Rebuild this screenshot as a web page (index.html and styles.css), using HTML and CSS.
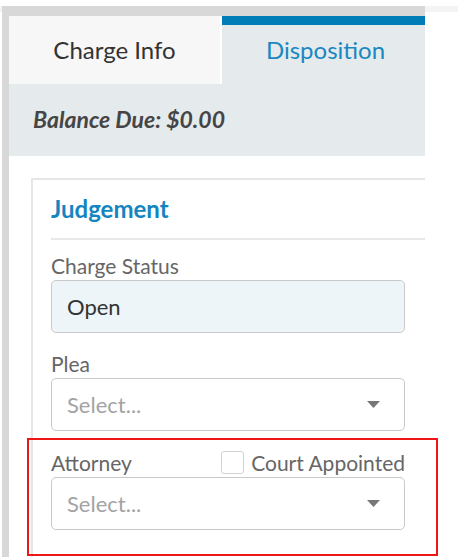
FILE: index.html
```html
<!DOCTYPE html>
<html>
<head>
<meta charset="utf-8">
<link rel="stylesheet" href="styles.css">
</head>
<body>
<div class="page">
  <div class="panel">
    <div class="tabs">
      <div class="tab tab-inactive">Charge Info</div>
      <div class="tab tab-active">Disposition</div>
    </div>
    <div class="balance">Balance Due: $0.00</div>
    <div class="content">
      <div class="card">
        <div class="card-title">Judgement</div>
        <div class="divider"></div>
        <div class="field">
          <div class="label">Charge Status</div>
          <div class="input readonly">Open</div>
        </div>
        <div class="field">
          <div class="label">Plea</div>
          <div class="input select">
            <span class="placeholder">Select...</span>
            <svg class="caret" width="13" height="7" viewBox="0 0 13 7"><polygon points="0,0 13,0 6.5,7" fill="#777"/></svg>
          </div>
        </div>
        <div class="field">
          <div class="label-row">
            <span class="label">Attorney</span>
            <span class="check-wrap"><span class="checkbox"></span><span class="label">Court Appointed</span></span>
          </div>
          <div class="input select">
            <span class="placeholder">Select...</span>
            <svg class="caret" width="13" height="7" viewBox="0 0 13 7"><polygon points="0,0 13,0 6.5,7" fill="#777"/></svg>
          </div>
        </div>
      </div>
    </div>
  </div>
  <div class="highlight"></div>
</div>
</body>
</html>
```
FILE: styles.css
```css
html, body {
  margin: 0;
  padding: 0;
  background: #ffffff;
}
body {
  font-family: Lato, "Open Sans", sans-serif;
  width: 458px;
  height: 557px;
  overflow: hidden;
}
.page {
  position: relative;
  width: 458px;
  height: 557px;
  background: linear-gradient(#f4f4f4 0, #f4f4f4 6px, #ffffff 6px);
}
.panel {
  margin: 6px 0 0 2px;
  width: 416px;
  height: 551px;
  border-top: 10px solid #d8d8d8;
  border-left: 7px solid #d8d8d8;
  overflow: hidden;
  background: #ffffff;
}
.tabs {
  display: flex;
  height: 68px;
}
.tab {
  display: flex;
  align-items: center;
  justify-content: center;
  font-size: 24px;
  padding-bottom: 2px;
  box-sizing: border-box;
}
.tab-inactive {
  width: 211px;
  margin-right: 2px;
  background: #f7f7f7;
  color: #333333;
}
.tab-active {
  flex: 1;
  background: #e5eaed;
  color: #1a87c2;
  box-shadow: inset 0 9px 0 #007cb6;
  padding-left: 4px;
}
.balance {
  height: 72px;
  background: #e5eaed;
  display: flex;
  align-items: center;
  padding-left: 24px;
  font-size: 23px;
  font-weight: bold;
  font-style: italic;
  color: #454545;
  padding-bottom: 2px;
  box-sizing: border-box;
}
.content {
  padding: 22px 0 0 22px;
}
.card {
  width: 440px;
  border-top: 2px solid #e6e6e6;
  border-left: 2px solid #e6e6e6;
  padding: 16px 0 0 18px;
  height: 400px;
}
.card-title {
  font-size: 24px;
  line-height: 26px;
  font-weight: bold;
  color: #1585c0;
}
.divider {
  margin-top: 16px;
  height: 2px;
  background: #e8e8e8;
}
.field {
  width: 354px;
}
.field + .field {
  margin-top: 18px;
}
.divider + .field {
  margin-top: 13px;
}
.label {
  font-size: 21px;
  line-height: 25px;
  color: #666666;
}
.label-row {
  display: flex;
  justify-content: space-between;
  align-items: center;
  padding-top: 1px;
}
.check-wrap {
  display: flex;
  align-items: center;
  gap: 7px;
}
.checkbox {
  width: 23px;
  height: 23px;
  box-sizing: border-box;
  border: 1.5px solid #d2d2d2;
  border-radius: 3px;
  background: #ffffff;
}
.input {
  margin-top: 2px;
  height: 53px;
  box-sizing: border-box;
  border: 1.5px solid #c9c9c9;
  border-radius: 5px;
  display: flex;
  align-items: center;
  padding: 0 24px 1px 15px;
  font-size: 22px;
}
.readonly {
  background: #eef5f9;
  color: #333333;
}
.select {
  background: #ffffff;
  justify-content: space-between;
}
.placeholder {
  color: #a3a3a3;
}
.caret {
  display: block;
}
.highlight {
  position: absolute;
  left: 27px;
  top: 432px;
  width: 407px;
  height: 114px;
  border: 2px solid #ee1515;
}
```
